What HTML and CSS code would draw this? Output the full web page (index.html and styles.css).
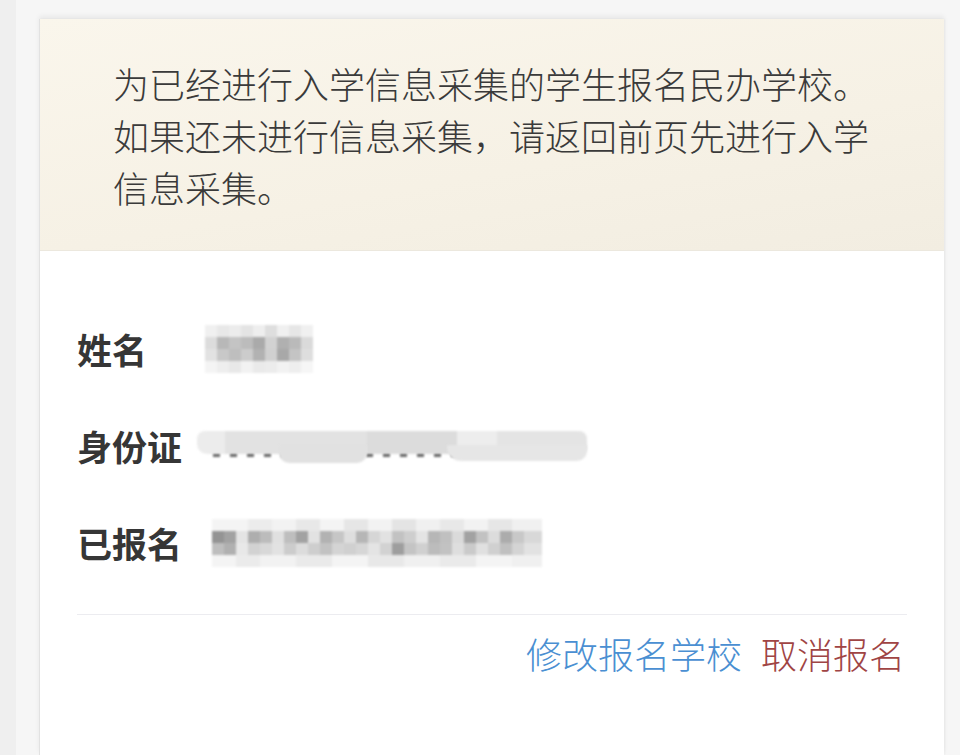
FILE: index.html
```html
<!DOCTYPE html>
<html lang="zh-CN">
<head>
<meta charset="utf-8">
<title>报名民办学校</title>
<link rel="stylesheet" href="styles.css">
</head>
<body>
<div class="page">
  <div class="rail"></div>
  <div class="card">
    <div class="notice">为已经进行入学信息采集的学生报名民办学校。如果还未进行信息采集，请返回前页先进行入学信息采集。</div>
    <div class="info">
      <div class="rows">
        <div class="row">
          <span class="label">姓名</span>
          <div class="mosaic mosaic-name">
            <div class="mr n1"></div><div class="mr n2"></div><div class="mr n3"></div><div class="mr n4"></div>
          </div>
        </div>
        <div class="row">
          <span class="label">身份证</span>
          <div class="idval">
            <div class="digits"></div>
            <div class="smudge"></div>
            <div class="bump bump-a"></div>
            <div class="bump bump-b"></div>
          </div>
        </div>
        <div class="row">
          <span class="label">已报名</span>
          <div class="mosaic mosaic-school">
            <div class="mr s1"></div><div class="mr s2"></div><div class="mr s3"></div><div class="mr s4"></div>
          </div>
        </div>
      </div>
      <div class="divider"></div>
      <div class="actions">
        <a class="link link-edit" href="#">修改报名学校</a>
        <a class="link link-cancel" href="#">取消报名</a>
      </div>
    </div>
  </div>
</div>
</body>
</html>
```
FILE: styles.css
```css
* { box-sizing: border-box; }
html, body { margin: 0; padding: 0; }
body {
  width: 960px;
  height: 755px;
  overflow: hidden;
  background: #f0f0f0;
  font-family: "Noto Sans CJK SC", "Noto Sans", sans-serif;
}
.page {
  display: flex;
  height: 755px;
  padding: 0 16px 0 16px;
  background: linear-gradient(to right, #efefef 0 16px, #f6f6f6 16px 100%);
}
.rail {
  width: 23px;
  flex: none;
  background: #f6f6f6;
}
.card {
  flex: 1;
  margin-top: 19px;
  background: #ffffff;
  border-left: 1px solid #e2e2e2;
  box-shadow: 0 -3px 5px rgba(0,0,0,0.06), 1px 0 2px rgba(0,0,0,0.04);
  display: flex;
  flex-direction: column;
}
.notice {
  padding: 38px 62px 37px 73px;
  background: linear-gradient(170deg, #faf6ec 0%, #f6f1e5 60%, #f2ede1 100%);
  border-bottom: 1px solid #ece8de;
  color: #3a3a3a;
  font-size: 36px;
  line-height: 52px;
  font-weight: 300;
}
.info {
  padding: 68px 37px 0 37px;
}
.rows {
  display: flex;
  flex-direction: column;
  gap: 37px;
}
.row {
  display: flex;
  align-items: center;
  height: 60px;
}
.label {
  font-size: 35px;
  font-weight: 700;
  color: #363636;
  line-height: 40px;
  flex: none;
}
.mosaic {
  display: flex;
  flex-direction: column;
  filter: blur(1.2px);
}
.mr { height: 12px; }
.mosaic-name {
  width: 108px;
  margin-left: 58px;
}
.n1 { background: linear-gradient(to right, #f0f0f0 0 12px, #e8e8e8 12px 24px, #ececec 24px 36px, #e4e4e4 36px 48px, #eeeeee 48px 60px, #dedede 60px 72px, #f0f0f0 72px 84px, #e6e6e6 84px 96px, #f0f0f0 96px 108px); }
.n2 { background: linear-gradient(to right, #dcdcdc 0 12px, #b8b8b8 12px 24px, #c4c4c4 24px 36px, #bcbcbc 36px 48px, #aaaaaa 48px 60px, #d2d2d2 60px 72px, #b0b0b0 72px 84px, #bababa 84px 96px, #dadada 96px 108px); }
.n3 { background: linear-gradient(to right, #e2e2e2 0 12px, #c8c8c8 12px 24px, #bebebe 24px 36px, #cccccc 36px 48px, #b2b2b2 48px 60px, #d0d0d0 60px 72px, #a8a8a8 72px 84px, #c4c4c4 84px 96px, #dedede 96px 108px); }
.n4 { background: linear-gradient(to right, #f4f4f4 0 12px, #eeeeee 12px 24px, #e8e8e8 24px 36px, #f2f2f2 36px 48px, #eaeaea 48px 60px, #ececec 60px 72px, #f2f2f2 72px 84px, #eeeeee 84px 96px, #f6f6f6 96px 108px); }
.mosaic-school {
  width: 330px;
  margin-left: 30px;
}
.s1 { background: linear-gradient(to right, #f4f4f4 0 36px, #ececec 36px 60px, #f2f2f2 60px 84px, #e8e8e8 84px 108px, #f4f4f4 108px 132px, #e6e6e6 132px 156px, #f2f2f2 156px 180px, #e4e4e4 180px 204px, #f0f0f0 204px 228px, #e8e8e8 228px 252px, #f2f2f2 252px 276px, #e6e6e6 276px 300px, #f0f0f0 300px 330px); }
.s2 { background: linear-gradient(to right, #949494 0 12px, #a2a2a2 12px 24px, #e4e4e4 24px 36px, #aeaeae 36px 48px, #bcbcbc 48px 60px, #e0e0e0 60px 72px, #bebebe 72px 84px, #a2a2a2 84px 96px, #e2e2e2 96px 108px, #b2b2b2 108px 120px, #c6c6c6 120px 132px, #dedede 132px 144px, #b6b6b6 144px 156px, #d6d6d6 156px 168px, #e2e2e2 168px 180px, #c2c2c2 180px 192px, #cecece 192px 204px, #e4e4e4 204px 216px, #b6b6b6 216px 228px, #c0c0c0 228px 240px, #dadada 240px 252px, #a2a2a2 252px 264px, #c2c2c2 264px 276px, #dcdcdc 276px 288px, #acacac 288px 300px, #c8c8c8 300px 312px, #d8d8d8 312px 330px); }
.s3 { background: linear-gradient(to right, #bebebe 0 12px, #b0b0b0 12px 24px, #e8e8e8 24px 36px, #d2d2d2 36px 48px, #d8d8d8 48px 60px, #e2e2e2 60px 72px, #cccccc 72px 84px, #dcdcdc 84px 96px, #cecece 96px 108px, #c2c2c2 108px 120px, #d4d4d4 120px 132px, #d0d0d0 132px 144px, #d6d6d6 144px 156px, #e4e4e4 156px 168px, #d2d2d2 168px 180px, #9e9e9e 180px 192px, #c4c4c4 192px 204px, #d0d0d0 204px 216px, #bcbcbc 216px 228px, #c2c2c2 228px 240px, #dedede 240px 252px, #cacaca 252px 264px, #e0e0e0 264px 276px, #d0d0d0 276px 288px, #c0c0c0 288px 300px, #d4d4d4 300px 312px, #e2e2e2 312px 330px); }
.s4 { background: linear-gradient(to right, #f4f4f4 0 24px, #ebebeb 24px 48px, #f2f2f2 48px 84px, #eaeaea 84px 120px, #f4f4f4 120px 156px, #e8e8e8 156px 192px, #f0f0f0 192px 228px, #eaeaea 228px 264px, #f4f4f4 264px 300px, #f0f0f0 300px 330px); }
.idval {
  position: relative;
  width: 390px;
  height: 34px;
  margin-left: 15px;
  margin-top: 4px;
}
.digits {
  position: absolute;
  left: 16px;
  right: 50px;
  top: 21px;
  height: 5px;
  background: repeating-linear-gradient(to right, #6a6a6a 0 7px, transparent 7px 17px);
  filter: blur(0.8px);
}
.smudge {
  position: absolute;
  left: 0;
  top: 0;
  width: 390px;
  height: 23px;
  border-radius: 8px 8px 6px 10px;
  background: linear-gradient(to right, #ececec 0 28px, #e2e2e2 28px 170px, #dcdcdc 170px 260px, #ededed 260px 300px, #e4e4e4 300px 390px);
  filter: blur(1px);
}
.bump {
  position: absolute;
  top: 14px;
  background: #e3e3e3;
  filter: blur(1px);
}
.bump-a {
  left: 82px;
  width: 88px;
  height: 18px;
  border-radius: 0 0 10px 10px;
  background: #e1e1e1;
}
.bump-b {
  left: 250px;
  width: 140px;
  height: 16px;
  border-radius: 0 0 10px 14px;
  background: #e6e6e6;
}
.divider {
  height: 1px;
  margin-top: 41px;
  background: #ececf0;
}
.actions {
  display: flex;
  justify-content: flex-end;
  gap: 19px;
  margin-top: 20px;
  padding-right: 2px;
}
.link {
  font-size: 36px;
  line-height: 36px;
  text-decoration: none;
  font-weight: 300;
}
.link-edit { color: #4a8fd2; }
.link-cancel { color: #a04444; }
```
